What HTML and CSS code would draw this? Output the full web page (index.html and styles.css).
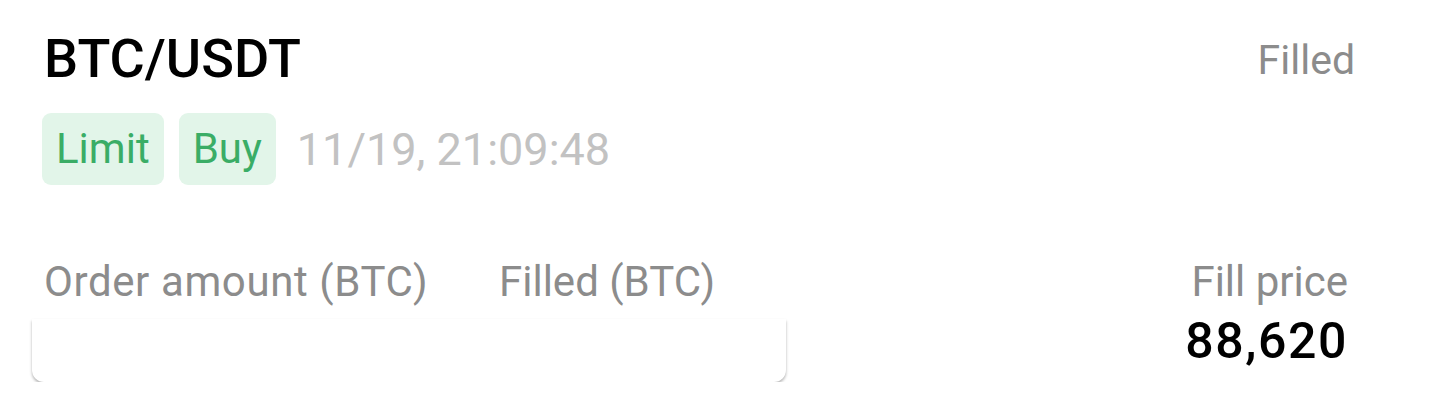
FILE: index.html
```html
<!DOCTYPE html>
<html lang="en">
<head>
  <meta charset="UTF-8">
  <title>Order</title>
  <meta name="viewport" content="width=device-width, initial-scale=1.0">
  <link rel="stylesheet" href="styles.css">
</head>
<body>

  <div class="order">
    <div class="head">
      <h2 class="pair">BTC/USDT</h2>
      <span class="status">Filled</span>
    </div>

    <div class="meta">
      <span class="tag">Limit</span>
      <span class="tag">Buy</span>
      <span class="time">11/19, 21:09:48</span>
    </div>

    <div class="details">
      <div class="left">
        <div class="labels">
          <span class="label amount">Order amount (BTC)</span>
          <span class="label">Filled (BTC)</span>
        </div>
        <div class="card"></div>
      </div>
      <div class="right">
        <span class="label">Fill price</span>
        <span class="price">88,620</span>
      </div>
    </div>
  </div>

</body>
</html>
```

FILE: styles.css
```css
body {
  margin: 0;
  background: #fff;
  font-family: Roboto, "Liberation Sans", Arial, sans-serif;
  color: #111;
}

.order {
  padding: 28px 75px 0 44px;
}

.head {
  display: flex;
  justify-content: space-between;
  align-items: flex-start;
}

.pair {
  margin: 0;
  font-size: 54px;
  font-weight: 500;
  line-height: 62px;
  color: #000;
}

.status {
  font-size: 41px;
  line-height: 48px;
  margin-top: 8px;
  color: #8c8c8c;
}

.meta {
  display: flex;
  align-items: center;
  gap: 15px;
  margin-top: 23px;
  margin-left: -2px;
}

.tag {
  background: #e2f5e9;
  color: #3aad66;
  font-size: 42px;
  line-height: 72px;
  padding: 0 14px;
  border-radius: 9px;
}

.time {
  font-size: 45px;
  color: #c2c2c2;
  margin-left: 6px;
}

.details {
  display: flex;
  justify-content: space-between;
  margin-top: 72px;
  padding-right: 8px;
}

.left {
  width: 754px;
  margin-left: -12px;
}

.labels {
  display: flex;
  padding-left: 12px;
}

.label {
  font-size: 42px;
  line-height: 50px;
  color: #8c8c8c;
}

.amount {
  width: 455px;
  letter-spacing: 0.6px;
}

.card {
  height: 63px;
  margin-top: 12px;
  background: #fff;
  border-radius: 0 0 12px 12px;
  box-shadow: 0 2px 3px rgba(0, 0, 0, 0.3);
}

.right {
  display: flex;
  flex-direction: column;
  align-items: flex-end;
  margin-right: -1px;
}

.price {
  font-size: 50px;
  font-weight: 500;
  letter-spacing: 1.6px;
  line-height: 56px;
  color: #000;
  margin-top: 6px;
}
```
